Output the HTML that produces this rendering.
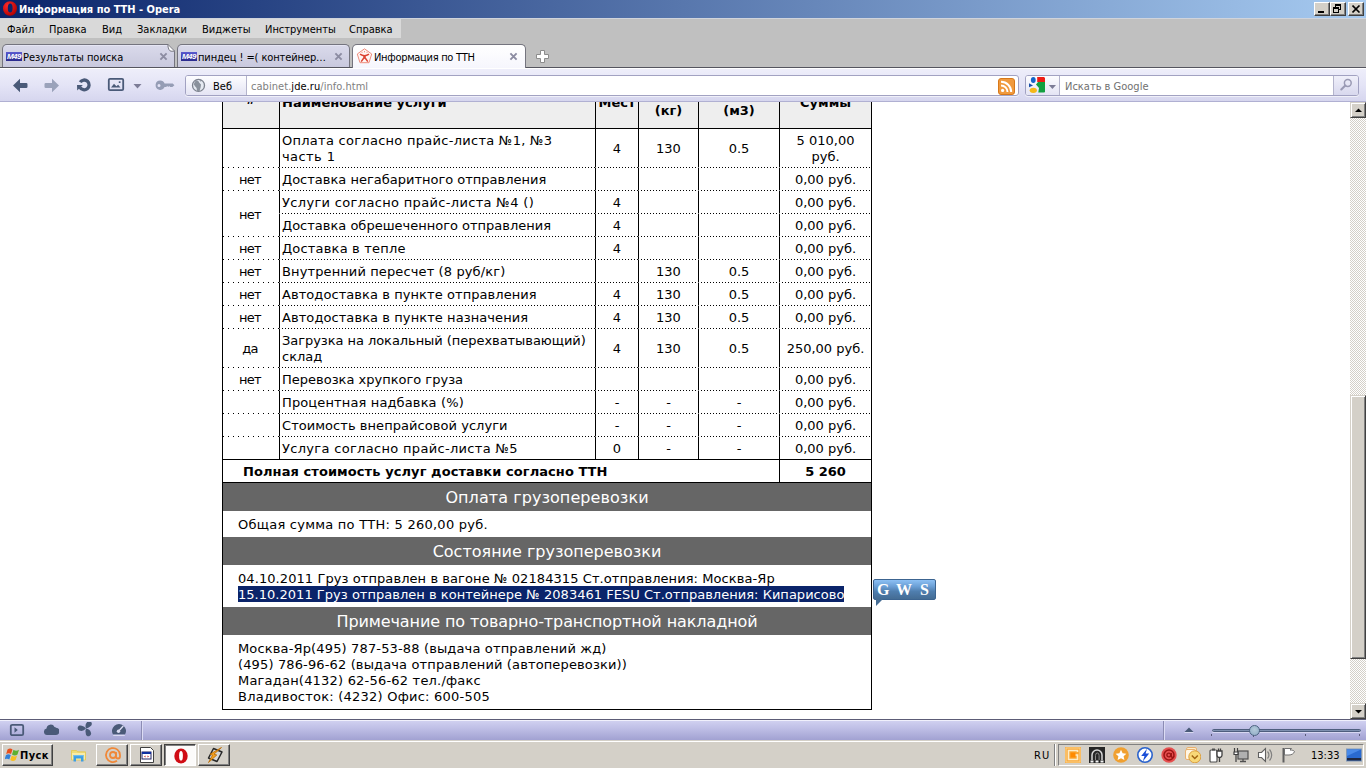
<!DOCTYPE html>
<html lang="ru"><head><meta charset="utf-8"><title>Информация по ТТН - Opera</title>
<style>
html,body{margin:0;padding:0}
body{width:1366px;height:768px;overflow:hidden;position:relative;background:#fff;font-family:"DejaVu Sans Condensed","Liberation Sans",sans-serif;font-size:11px;color:#000}
.abs{position:absolute}
#title{left:0;top:0;width:1366px;height:18px;background:linear-gradient(90deg,#0a246a 0%,#a6caf0 100%)}
#title .t{left:19px;top:3px;color:#fff;font-weight:bold;font-size:11px;line-height:14px;white-space:nowrap}
.cb{top:2px;width:16px;height:14px;background:#d4d0c8;box-sizing:border-box;border:1px solid;border-color:#fff #404040 #404040 #fff;box-shadow:inset -1px -1px 0 #808080}
#menu{left:0;top:18px;width:1366px;height:20px;background:linear-gradient(#d0d4dc 0,#d0d4dc 1px,#c0c0c0 1px)}
#menu .bg{left:0;top:1px;width:401px;height:19px;background:#d9d9d9}
#menu span{position:absolute;top:5px;line-height:14px;font-size:11px;white-space:nowrap}
#tabs{left:0;top:38px;width:1366px;height:30px;background:#c0c0c0}
.tab{position:absolute;top:6px;height:23px;box-sizing:border-box;border:1px solid #74747e;border-bottom:none;border-radius:5px 5px 0 0;background:linear-gradient(#e6e6f4 0,#e6e6f4 1px,#d9d9ea 1px,#c9c9de)}
.tab.act{background:linear-gradient(#ffffff,#f6f6fd);height:24px}
.tab .lbl{position:absolute;top:6px;line-height:14px;font-size:11px;white-space:nowrap}
.tab .x{position:absolute;top:5px;font-size:11px;line-height:14px;color:#7a7a86;font-weight:bold}
#addr{left:0;top:68px;width:1366px;height:34px;background:linear-gradient(#fafaff,#e6e6f8 60%,#d4d4ee)}
#page{left:0;top:102px;width:1349px;height:614px;background:#fff;overflow:hidden;font-family:"DejaVu Sans","Liberation Sans",sans-serif;font-size:13px}
#sb{left:1349px;top:102px;width:17px;height:614px;background:#e9e7e2}
#status{left:0;top:716px;width:1366px;height:24px;background:linear-gradient(#c4c4e8,#dcdcf4 50%,#c0c0e4)}
#task{left:0;top:740px;width:1366px;height:28px;background:#d4d0c8}

#box{left:222px;top:-31px;width:650px;box-sizing:border-box;border:1px solid #000;border-top:none;border-left:none;border-right:none}
#box:after{content:"";position:absolute;left:0;top:0;bottom:0;width:1px;background:#000}
#box:before{content:"";position:absolute;right:0;top:0;bottom:0;width:1px;background:#000}
table.t{border-collapse:separate;border-spacing:0;table-layout:fixed;width:650px;border-right:1px solid #000;border-bottom:1px solid #000;box-sizing:border-box}
table.t td,table.t th{border-left:1px solid #000;border-top:1px solid transparent;padding:4px 0 2px;line-height:16px;text-align:center;vertical-align:middle;font-weight:normal;font-size:13px;white-space:nowrap;overflow:hidden;background:repeating-linear-gradient(90deg,#000 0,#000 1px,transparent 1px,transparent 3px) 0 0/100% 1px no-repeat;background-origin:border-box}
table.t tr.h th{background:#eee;font-weight:bold;height:57px;box-sizing:border-box;padding:0 0 17px;border-top:none;vertical-align:bottom}
table.t tr.h th.m{padding-bottom:9px}
table.t tr.h th.l{text-align:left;padding-left:2px}
table.t tr.f td, table.t tr.tot td{border-top:1px solid #000;background:none}
table.t td.n{text-align:left;padding-left:2px}
table.t td.c1{letter-spacing:-0.7px;padding-right:2px;background:repeating-linear-gradient(90deg,#000 0,#000 1px,transparent 1px,transparent 5px) 1px 0/100% 1px no-repeat;background-origin:border-box}
table.t tr.tot td{font-weight:bold}
table.t td.tl{text-align:left;padding-left:20px}
.band{height:28px;background:#666;color:#fff;font-size:16px;line-height:30px;overflow:hidden;text-align:center;white-space:nowrap;margin:0 1px}
.txt{box-sizing:border-box;padding-left:16px;line-height:16px;font-size:13px;white-space:nowrap}
.sel{background:#0a246a;color:#fff;box-shadow:0 -1px 0 #0a246a}
#gws{left:873px;top:477px;width:63px;height:21px;box-sizing:border-box;border:1px solid #3c6490;border-radius:2px;background:linear-gradient(#8cc0f4 0,#6a9ed4 35%,#4f7eae 60%,#446c94 100%)}
#gws:after{content:"";position:absolute;left:2px;top:19px;width:0;height:0;border-style:solid;border-width:7px 7px 0 0;border-color:#446c94 transparent transparent transparent}
#gws span{position:absolute;top:0;font-family:"Liberation Serif",serif;font-weight:bold;font-size:16px;color:#fff;line-height:20px}
.cb i{position:absolute;background:#000}

.tab .fav{position:absolute;top:7px;width:16px;height:9px;background:linear-gradient(#5a5ad0,#2a2a8c);overflow:hidden}
.tab .fav b{position:absolute;left:1px;top:0;font-size:8px;line-height:9px;color:#fff;font-family:"Liberation Sans",sans-serif;letter-spacing:-0.6px;font-style:italic}
.tab svg.x{position:absolute;top:7px}
.tab svg.x path{stroke:#8c8ca2;stroke-width:1.9;fill:none}
.tab .fold{position:absolute;right:-1px;top:-1px;width:0;height:0;border-style:solid;border-width:0 0 7px 7px;border-color:transparent transparent #fff transparent;filter:drop-shadow(-1px 1px 0 #777)}

#addr{background:linear-gradient(#fff 0,#fff 1px,#eeeefa 1px,#e4e4f6 50%,#d6d6ee 33px,#b0b0d2 33px,#b0b0d2 34px)}
.fld{box-sizing:border-box;border:1px solid #a2a2c2;border-radius:3px;background:#fff;box-shadow:0 1px 0 rgba(255,255,255,.6)}
.fld .badge{background:linear-gradient(#fdfdff,#e4e4f4);border-right:1px solid #b4b4cc;border-radius:2px 0 0 2px}

#status{top:719px;height:21px;background:linear-gradient(#5c5c76 0,#5c5c76 1px,#f0f0fc 1px,#f0f0fc 2px,#d0d0f0 2px,#bcbce4 50%,#a2a2d2 21px)}
#task{top:740px;height:28px;background:linear-gradient(#d4d0c8 0,#d4d0c8 1px,#fff 1px,#fff 2px,#d4d0c8 2px)}
#page{height:617px}
#sb{left:1350px;width:16px;height:617px}

.btn{box-sizing:border-box;background:#d4d0c8;border:1px solid;border-color:#fff #404040 #404040 #fff;box-shadow:inset -1px -1px 0 #808080}
.btn.on{border-color:#404040 #fff #fff #404040;box-shadow:inset 1px 1px 0 #808080;background:#fcfbfa}

#sb{background:conic-gradient(#fff 25%,#d4d0c8 0 50%,#fff 0 75%,#d4d0c8 0) 0 0/2px 2px}
.sbb{box-sizing:border-box;background:#d4d0c8;border:1px solid;border-color:#d4d0c8 #404040 #404040 #d4d0c8;box-shadow:inset 1px 1px 0 #fff,inset -1px -1px 0 #808080}
</style></head><body>
<div id="title" class="abs"><svg class="abs" style="left:2px;top:1px" width="16" height="16" viewBox="0 0 16 16"><defs><radialGradient id="og" cx="35%" cy="30%" r="75%"><stop offset="0" stop-color="#ff2a2a"/><stop offset="1" stop-color="#b00000"/></radialGradient></defs><path d="M8 0.200a7 7.300 0 1 0 0 14.600a7 7.300 0 1 0 0-14.600zM8.200 2.500a2.400 4.500 0 1 1 0 9a2.400 4.500 0 1 1 0-9z" fill="url(#og)" fill-rule="evenodd"/></svg><span class="abs t">Информация по ТТН - Opera</span>
<div class="abs cb" style="left:1314px"><i style="left:3px;top:8px;width:6px;height:2px"></i></div>
<div class="abs cb" style="left:1330px"><svg class="abs" style="left:2px;top:1px" width="10" height="10" viewBox="0 0 10 10" shape-rendering="crispEdges"><path d="M2 0H8V6H6V5H7V2H3V3H2Z" fill="#000"/><path d="M0 3H6V9H0ZM1 5H5V8H1Z" fill="#000" fill-rule="evenodd"/></svg></div>
<div class="abs cb" style="left:1348px"><svg class="abs" style="left:3px;top:2px" width="9" height="8" viewBox="0 0 9 8"><path d="M0.5 0.5l7 7M7.5 0.5l-7 7" stroke="#000" stroke-width="1.6" fill="none"/></svg></div></div>
<div id="menu" class="abs"><div class="abs bg"></div>
<span style="left:7px">Файл</span><span style="left:49px">Правка</span><span style="left:102px">Вид</span><span style="left:137px">Закладки</span><span style="left:202px">Виджеты</span><span style="left:265px">Инструменты</span><span style="left:349px">Справка</span></div>
<div id="tabs" class="abs"><div class="abs" style="left:0;top:29px;width:1366px;height:1px;background:#55555f"></div>
<div class="tab" style="left:2px;width:173px"><span class="fav" style="left:3px"><b>M49</b></span><span class="lbl" style="left:20px">Результаты поиска</span><svg class="x" style="left:156px" width="9" height="9" viewBox="0 0 9 9"><path d="M1.400 1.400l6.200 6.200M7.600 1.400l-6.200 6.200"/></svg><svg class="abs" style="right:-1px;top:-1px" width="8" height="8" viewBox="0 0 8 8"><path d="M0.500 0H8V7.500z" fill="#c0c0c0"/><path d="M0.800 0.300L7.700 7.200H4Q1.200 6.800 0.800 0.300z" fill="#fff" stroke="#6a6a74" stroke-width=".9"/></svg></div>
<div class="tab" style="left:177px;width:173px"><span class="fav" style="left:3px"><b>M49</b></span><span class="lbl" style="left:20px;letter-spacing:-0.1px">пиндец ! =( контейнер…</span><svg class="x" style="left:156px" width="9" height="9" viewBox="0 0 9 9"><path d="M1.400 1.400l6.200 6.200M7.600 1.400l-6.200 6.200"/></svg></div>
<div class="tab act" style="left:352px;width:174px"><svg class="abs" style="left:3px;top:3px" width="17" height="17" viewBox="0 0 17 17"><path d="M8.500 0.800l7.200 5.200-2.700 8.700H4L1.300 6z" fill="#fff6f4" stroke="#ee8c7c" stroke-width="1"/><path d="M6 4.800v-1M8.500 4.300v-1.200M11 4.800v-1" stroke="#ee8c7c" stroke-width="1"/><path d="M4 6.200Q8.500 9.400 13 6.200" stroke="#dc4434" stroke-width="1.500" fill="none"/><path d="M6.800 7.600h3.400L8.500 11z" fill="#dc4434"/><path d="M8.500 9L5.200 13.600M8.500 9l3.300 4.600" stroke="#dc4434" stroke-width="1.500" fill="none"/></svg><span class="lbl" style="left:21px;letter-spacing:-0.3px">Информация по ТТН</span><svg class="x" style="left:156px" width="9" height="9" viewBox="0 0 9 9"><path d="M1.400 1.400l6.200 6.200M7.600 1.400l-6.200 6.200"/></svg></div>
<svg class="abs" style="left:535px;top:11px" width="15" height="15" viewBox="0 0 15 15"><path d="M5.5 1.5h4v4h4v4h-4v4h-4v-4h-4v-4h4z" fill="#fff" stroke="#8c8c8c" stroke-width="1" stroke-linejoin="round"/></svg>
</div>
<div id="addr" class="abs">
<svg class="abs" style="left:12px;top:10px" width="16" height="15" viewBox="0 0 16 15"><path d="M1 7.5L8 0.8V5h6.2a1.3 1.3 0 0 1 1.3 1.3v2.4A1.3 1.3 0 0 1 14.200 10H8v4.200z" fill="#4a5a78"/></svg>
<svg class="abs" style="left:44px;top:10px" width="16" height="15" viewBox="0 0 16 15"><path d="M15 7.5L8 0.8V5H1.800A1.300 1.300 0 0 0 .5 6.300v2.400A1.300 1.300 0 0 0 1.800 10H8v4.200z" fill="#9aa2ba"/></svg>
<svg class="abs" style="left:76px;top:9px" width="17" height="17" viewBox="0 0 17 17"><path d="M4.140 5.160A4.900 4.900 0 1 1 3.960 10.350" stroke="#4a5a78" stroke-width="3.300" fill="none"/><path d="M1 8.100h5.800L1.200 13.600z" fill="#4a5a78"/></svg>
<svg class="abs" style="left:107px;top:9px" width="18" height="15" viewBox="0 0 18 15"><rect x="1.800" y="1.800" width="14.400" height="11.400" rx="1.200" fill="none" stroke="#4a5a78" stroke-width="1.800"/><path d="M4 10.500l3-3.800 2.400 2.600 1.700-1.600 2.400 2.800z" fill="#4a5a78"/><rect x="11.800" y="4.300" width="1.700" height="1.700" fill="#4a5a78"/></svg>
<svg class="abs" style="left:133px;top:16px" width="9" height="5" viewBox="0 0 9 5"><path d="M0.500 0h8L4.500 4.500z" fill="#7c7c96"/></svg>
<svg class="abs" style="left:155px;top:12px" width="20" height="11" viewBox="0 0 20 11"><path d="M5.200 0.500a4.700 4.700 0 1 0 4.400 6.600h1.600l1-1 1 1 1-1 1 1h2.200l2-1.900-1.700-1.600H9.600A4.700 4.700 0 0 0 5.200.5zM4 3.900a1.500 1.500 0 1 1 0 3 1.500 1.500 0 0 1 0-3z" fill="#959db5" fill-rule="evenodd"/></svg>
<div class="abs fld" style="left:185px;top:7px;width:834px;height:21px"><div class="abs badge" style="left:0;top:0;width:60px;height:19px"></div>
<svg class="abs" style="left:5px;top:2px" width="15" height="15" viewBox="0 0 15 15"><circle cx="7.500" cy="7.400" r="6" fill="#e6eaf2" stroke="#7c828e" stroke-width="1.300"/><path d="M5.200 2.200L7.300 3l1 1.800 1.700 1.700-.3 2.600L8.600 13l-2.600.2-.4-3.300L4 8.300 2.800 6.300 3.700 4z" fill="#8a919c"/><path d="M8.500 1.800l2.200 1-1.200 1z" fill="#8a919c"/></svg>
<span class="abs" style="left:27px;top:4px;line-height:14px;white-space:nowrap">Веб</span>
<span class="abs" style="left:65px;top:4px;line-height:14px;white-space:nowrap;color:#808080;letter-spacing:0.05px">cabinet.<span style="color:#000">jde.ru</span>/info.html</span>
<svg class="abs" style="left:812px;top:2px" width="17" height="17" viewBox="0 0 17 17"><rect x=".5" y=".5" width="16" height="16" rx="2.500" fill="#f09a3e" stroke="#d87818"/><circle cx="4.600" cy="12.400" r="1.600" fill="#fff"/><path d="M3 7.500a6.500 6.500 0 0 1 6.500 6.500M3 3.800A10.200 10.200 0 0 1 13.200 14" stroke="#fff" stroke-width="1.900" fill="none"/></svg>
</div>
<div class="abs fld" style="left:1025px;top:7px;width:334px;height:21px"><div class="abs badge" style="left:0;top:0;width:33px;height:19px"></div>
<svg class="abs" style="left:0;top:0" width="33" height="19" viewBox="0 0 33 19"><ellipse cx="7.300" cy="4" rx="2.400" ry="3" fill="#1464c8"/><path d="M3 7.200L7 9.500 3 11.200z" fill="#1a50a8"/><ellipse cx="7.300" cy="14.300" rx="3.600" ry="2.600" fill="#f4b818"/><path d="M11.200 1h6.800l1 1v4h-7.800z" fill="#ee1c14"/><path d="M12 6h7v10l-.8.600H12.300L13 12 10 8.500z" fill="#12a040"/><path d="M22.800 9h7.200l-3.600 3.900z" fill="#7c7c96"/></svg>
<span class="abs" style="left:39px;top:4px;line-height:14px;white-space:nowrap;color:#707070">Искать в Google</span>
<div class="abs badge" style="right:0;top:0;width:24px;height:19px;border-right:none;border-left:1px solid #b4b4cc;border-radius:0 2px 2px 0;background:linear-gradient(#f0f0fa,#d8d8ee)"></div>
<svg class="abs" style="left:314px;top:2px" width="13" height="13" viewBox="0 0 13 13"><circle cx="7.800" cy="5" r="3.400" fill="none" stroke="#9a9ab4" stroke-width="1.500"/><path d="M5.300 7.500L1.300 11.500" stroke="#9a9ab4" stroke-width="2" stroke-linecap="round"/></svg>
</div>
</div>
<div id="page" class="abs"><div id="box" class="abs">
<table class="t" cellspacing="0" cellpadding="0"><colgroup><col style="width:57px"><col style="width:316px"><col style="width:43px"><col style="width:60px"><col style="width:81px"><col style="width:92px"></colgroup>
<tr class="h"><th style="padding-bottom:20px">#</th><th class="l">Наименование услуги</th><th>Кол-во<br>Мест</th><th class="m">Вес<br>(кг)</th><th class="m">Объем<br>(м3)</th><th>Расчет<br>Суммы</th></tr>
<tr class="f"><td class="c1"></td><td class="n"><span style="letter-spacing:0.274px">Оплата согласно прайс-листа №1, №3</span><br><span style="letter-spacing:0.429px">часть 1</span></td><td>4</td><td>130</td><td>0.5</td><td>5 010,00<br>руб.</td></tr>
<tr><td class="c1">нет</td><td class="n">Доставка негабаритного отправления</td><td></td><td></td><td></td><td>0,00 руб.</td></tr>
<tr><td class="c1" rowspan="2">нет</td><td class="n"><span style="letter-spacing:0.333px">Услуги согласно прайс-листа №4 ()</span></td><td>4</td><td></td><td></td><td>0,00 руб.</td></tr>
<tr><td class="n">Доставка обрешеченного отправления</td><td>4</td><td></td><td></td><td>0,00 руб.</td></tr>
<tr><td class="c1">нет</td><td class="n"><span style="letter-spacing:0.188px">Доставка в тепле</span></td><td>4</td><td></td><td></td><td>0,00 руб.</td></tr>
<tr><td class="c1">нет</td><td class="n"><span style="letter-spacing:0.117px">Внутренний пересчет (8 руб/кг)</span></td><td></td><td>130</td><td>0.5</td><td>0,00 руб.</td></tr>
<tr><td class="c1">нет</td><td class="n"><span style="letter-spacing:0.073px">Автодоставка в пункте отправления</span></td><td>4</td><td>130</td><td>0.5</td><td>0,00 руб.</td></tr>
<tr><td class="c1">нет</td><td class="n"><span style="letter-spacing:0.078px">Автодоставка в пункте назначения</span></td><td>4</td><td>130</td><td>0.5</td><td>0,00 руб.</td></tr>
<tr><td class="c1">да</td><td class="n"><span style="letter-spacing:-0.051px">Загрузка на локальный (перехватывающий)</span><br>склад</td><td>4</td><td>130</td><td>0.5</td><td>250,00 руб.</td></tr>
<tr><td class="c1">нет</td><td class="n">Перевозка хрупкого груза</td><td></td><td></td><td></td><td>0,00 руб.</td></tr>
<tr><td class="c1"></td><td class="n"><span style="letter-spacing:0.13px">Процентная надбавка (%)</span></td><td>-</td><td>-</td><td>-</td><td>0,00 руб.</td></tr>
<tr><td class="c1"></td><td class="n"><span style="letter-spacing:0.052px">Стоимость внепрайсовой услуги</span></td><td>-</td><td>-</td><td>-</td><td>0,00 руб.</td></tr>
<tr><td class="c1"></td><td class="n"><span style="letter-spacing:0.317px">Услуга согласно прайс-листа №5</span></td><td>0</td><td>-</td><td>-</td><td>0,00 руб.</td></tr>
<tr class="tot"><td colspan="5" class="tl"><span style="letter-spacing:0.08px">Полная стоимость услуг доставки согласно ТТН</span></td><td>5 260</td></tr>
</table>
<div class="band"><span style="letter-spacing:0.071px">Оплата грузоперевозки</span></div>
<div class="txt" style="height:26px;padding-top:6px"><span style="letter-spacing:0.242px">Общая сумма по ТТН: 5 260,00 руб.</span></div>
<div class="band">Состояние грузоперевозки</div>
<div class="txt" style="height:42px;padding-top:6px"><span style="letter-spacing:0.079px">04.10.2011 Груз отправлен в вагоне № 02184315 Ст.отправления: Москва-Яр</span><br><span class="sel" style="letter-spacing:0.025px">15.10.2011 Груз отправлен в контейнере № 2083461 FESU Ст.отправления: Кипарисово</span></div>
<div class="band"><span style="letter-spacing:-0.091px">Примечание по товарно-транспортной накладной</span></div>
<div class="txt" style="height:74px;padding-top:6px"><span style="letter-spacing:0.146px">Москва-Яр(495) 787-53-88 (выдача отправлений жд)</span><br><span style="letter-spacing:0.135px">(495) 786-96-62 (выдача отправлений (автоперевозки))</span><br><span style="letter-spacing:0.203px">Магадан(4132) 62-56-62 тел./факс</span><br><span style="letter-spacing:0.23px">Владивосток: (4232) Офис: 600-505</span></div>
</div>
<div id="gws" class="abs"><span style="left:3px">G</span><span style="left:22px">W</span><span style="left:46px">S</span></div>
</div>
<div id="sb" class="abs"><div class="abs sbb" style="left:0;top:0;width:16px;height:16px"><svg class="abs" style="left:4px;top:5px" width="7" height="4" viewBox="0 0 7 4"><path d="M0 4L3.500 0.500 7 4z" fill="#000"/></svg></div>
<div class="abs sbb" style="left:0;top:293px;width:16px;height:264px"></div>
<div class="abs sbb" style="left:0;top:601px;width:16px;height:16px"><svg class="abs" style="left:4px;top:6px" width="7" height="4" viewBox="0 0 7 4"><path d="M0 0L3.500 3.500 7 0z" fill="#000"/></svg></div></div>
<div id="status" class="abs">
<svg class="abs" style="left:9px;top:4px" width="16" height="14" viewBox="0 0 16 14"><rect x="1.800" y="1.800" width="12.400" height="10.400" rx="1.500" fill="none" stroke="#4a5a78" stroke-width="1.800"/><path d="M5.500 4.200l3.300 2.800-3.300 2.800z" fill="#4a5a78"/></svg>
<svg class="abs" style="left:43px;top:5px" width="16" height="12" viewBox="0 0 16 12"><path d="M4 11a3.300 3.300 0 0 1-.5-6.500A4.200 4.200 0 0 1 11.500 3a3 3 0 0 1 1.600 .8A3.600 3.600 0 0 1 12.500 11z" fill="#4a5a78"/></svg>
<svg class="abs" style="left:77px;top:3px" width="16" height="16" viewBox="0 0 16 16"><g fill="#4a5a78" transform="translate(9 6.500)"><path d="M0 0Q2.200 -3.200 5.400 -2.800A2.700 2.700 0 1 1 4.400 2.300Q1.600 1.800 0 0Z" transform="rotate(-55)"/><path d="M0 0Q2.200 -3.200 5.400 -2.800A2.700 2.700 0 1 1 4.400 2.300Q1.600 1.800 0 0Z" transform="rotate(185)"/><path d="M0 0Q2.200 -3.200 5.400 -2.800A2.700 2.700 0 1 1 4.400 2.300Q1.600 1.800 0 0Z" transform="rotate(65)"/></g></svg>
<svg class="abs" style="left:111px;top:4px" width="16" height="14" viewBox="0 0 16 14"><path d="M2 11.600A7 7 0 1 1 14 11.600z" fill="#4a5a78"/><path d="M2.200 12.300h11.600" stroke="#e4e4f8" stroke-width="1"/><path d="M7.500 8.300L12 3.300" stroke="#dcdcf2" stroke-width="1.400" stroke-linecap="round"/><circle cx="7.500" cy="8.300" r="1.700" fill="#dcdcf2"/></svg>
<div class="abs" style="left:141px;top:2px;width:1px;height:20px;background:#8c8cb4"></div><div class="abs" style="left:142px;top:2px;width:1px;height:20px;background:#dcdcf4"></div>
<div class="abs" style="left:1163px;top:2px;width:1px;height:20px;background:#8c8cb4"></div><div class="abs" style="left:1164px;top:2px;width:1px;height:20px;background:#dcdcf4"></div>
<svg class="abs" style="left:1184px;top:8px" width="10" height="6" viewBox="0 0 10 6"><path d="M0.500 5L5 0.500 9.500 5z" fill="#4a5a78"/><path d="M0.500 5.600h9" stroke="#e8e8f8" stroke-width=".8"/></svg>
<div class="abs" style="left:1212px;top:10px;width:149px;height:3px;box-sizing:border-box;border-radius:1.500px;background:#7e90b0;border:1px solid #4e5e7e;border-left-width:1px;border-right-width:1px;box-shadow:0 1px 0 rgba(230,230,250,.7)"></div>
<div class="abs" style="left:1211px;top:15px;width:1px;height:2px;background:#5a5a7a"></div><div class="abs" style="left:1253px;top:15px;width:1px;height:3px;background:#5a5a7a"></div><div class="abs" style="left:1305px;top:15px;width:1px;height:2px;background:#5a5a7a"></div><div class="abs" style="left:1359px;top:15px;width:1px;height:2px;background:#5a5a7a"></div>
<div class="abs" style="left:1249px;top:6px;width:11px;height:11px;box-sizing:border-box;border-radius:50%;border:1.300px solid #4e6482;background:radial-gradient(circle at 50% 40%,#b4cada,#8eaac4)"></div>
</div>
<div id="task" class="abs"><div class="abs btn" style="left:2px;top:4px;width:51px;height:22px"><svg class="abs" style="left:2px;top:1px" width="17" height="17" viewBox="0 0 17 17"><path d="M2.500 3.500c1.800-1.200 3.500-1.200 5 0L6 8C4.500 7 3 7 1.200 8z" fill="#e8501c"/><path d="M8.500 3.800c1.800 1.200 3.500 1.200 5.500 0L12.500 8.500c-1.800 1.200-3.500 1.200-5.500 0z" fill="#5cb030"/><path d="M1 9c1.800-1.200 3.300-1 4.800 0L4.300 13.500c-1.500-1-3-1-4.800 0z" fill="#3080d8"/><path d="M6.800 9.500c1.800 1.200 3.500 1.200 5.300 0L10.600 14c-1.800 1.200-3.500 1.200-5.300 0z" fill="#f8c020"/></svg><span class="abs" style="left:17px;top:4px;font-weight:bold;font-size:11px;line-height:14px;letter-spacing:0.4px">Пуск</span></div><svg class="abs" style="left:70px;top:8px" width="17" height="15" viewBox="0 0 17 15"><path d="M1.500 2.500h5l1.200 1.300H15.500V12H1.500z" fill="#f0dc78" stroke="#e4c84c" stroke-width=".8"/><path d="M2 5h13v6.500H2z" fill="#f8eca8"/><path d="M3.500 7h10v6.500h-2.500v-3h-5v3H3.500z" fill="#3c9ee4"/><path d="M3.500 7h10v1.200h-10z" fill="#6cbcf0"/></svg><div class="abs btn" style="left:96px;top:4px;width:32px;height:22px"><svg class="abs" style="left:7px;top:1px" width="18" height="18" viewBox="0 0 18 18"><circle cx="9" cy="9" r="3" fill="none" stroke="#f08838" stroke-width="1.800"/><path d="M12 6v4.500a2 2 0 0 0 4 0V9A7 7 0 1 0 13 14.800" fill="none" stroke="#f08838" stroke-width="1.800"/></svg></div><div class="abs btn" style="left:130px;top:4px;width:32px;height:22px"><svg class="abs" style="left:9px;top:2px" width="14" height="16" viewBox="0 0 14 16"><path d="M0.500 0.500h10l3 3v12h-13z" fill="#fff" stroke="#404040"/><rect x="2" y="5" width="9" height="7" fill="#fff" stroke="#202060"/><rect x="2" y="5" width="9" height="2" fill="#1030a0"/><path d="M4 9.500l1.500-1v2zM9 9.500l-1.500-1v2z" fill="#c02020"/></svg></div><div class="abs btn on" style="left:164px;top:4px;width:32px;height:22px"><svg class="abs" style="left:9px;top:3px" width="14" height="16" viewBox="0 0 14 16"><ellipse cx="7" cy="8" rx="6.700" ry="7.400" fill="#d00c14"/><ellipse cx="7" cy="7.800" rx="1.900" ry="4.900" fill="#fff"/></svg></div><div class="abs btn" style="left:198px;top:4px;width:32px;height:22px"><svg class="abs" style="left:7px;top:1px" width="18" height="18" viewBox="0 0 18 18"><path d="M7.500 2.500l8.500 3.500-5 9.500-8.500-3.500z" fill="#d8d8d8" stroke="#282828" stroke-width="1.500" stroke-linejoin="round"/><path d="M15.500 1.500L8 8.200l2.800.8L2.500 16.500 6.500 9.200 4 8.200z" fill="#f4a020" stroke="#b86800" stroke-width=".8" stroke-linejoin="round"/></svg></div><span class="abs" style="left:1034px;top:9px;font-size:11px;line-height:14px;letter-spacing:1px">RU</span><div class="abs" style="left:1054px;top:4px;width:1px;height:22px;background:#808080"></div><div class="abs" style="left:1055px;top:4px;width:1px;height:22px;background:#fff"></div><div class="abs" style="left:1058px;top:4px;width:306px;height:22px;box-sizing:border-box;border:1px solid;border-color:#808080 #fff #fff #808080"></div><svg class="abs" style="left:1065px;top:7px" width="16" height="16" viewBox="0 0 16 16"><rect x="0" y="0" width="16" height="16" fill="#f8a838"/><rect x="1" y="1" width="14" height="14" fill="none" stroke="#fcd490" stroke-width="1"/><path d="M12.500 5V3.500H3.500v9h9V8H8.500" fill="none" stroke="#fdecc8" stroke-width="1.600"/><rect x="5.500" y="5.500" width="5" height="5" fill="#ff8a00"/></svg><svg class="abs" style="left:1089px;top:7px" width="16" height="16" viewBox="0 0 16 16"><rect x="0" y="0" width="16" height="16" fill="#262626"/><path d="M3 13V8a5 5 0 0 1 10 0v5" stroke="#d8d8d8" stroke-width="1.500" fill="none"/><path d="M6.500 13V8.500a1.800 2.500 0 0 1 3.600 0V13" stroke="#8a8a8a" stroke-width="1" fill="none"/><path d="M1.500 13.500h3v2h-3zM6.500 13.500h3v2h-3zM11.500 13.500h3v2h-3z" fill="#f4f4f4"/></svg><svg class="abs" style="left:1113px;top:7px" width="16" height="16" viewBox="0 0 16 16"><circle cx="8" cy="8" r="7.800" fill="#f0a030"/><path d="M8 2.800l1.600 3.500 3.800.4-2.800 2.600.8 3.800L8 11.200l-3.400 1.900.8-3.800L2.600 6.700l3.800-.4z" fill="#fff"/></svg><svg class="abs" style="left:1137px;top:7px" width="16" height="16" viewBox="0 0 16 16"><circle cx="8" cy="8" r="7.200" fill="#fff" stroke="#2a62cc" stroke-width="1.600"/><path d="M10 1.800L4.200 9h3.300L5.800 14.500 12.200 6.600H8.600z" fill="#1a4ed8"/></svg><svg class="abs" style="left:1161px;top:7px" width="16" height="16" viewBox="0 0 16 16"><circle cx="8" cy="8" r="7.700" fill="#e65050"/><circle cx="8" cy="8" r="5" fill="none" stroke="#9c1414" stroke-width="1.500"/><circle cx="7.800" cy="8" r="1.900" fill="none" stroke="#9c1414" stroke-width="1.400"/><path d="M10.300 6v3.300a1.400 1.400 0 0 0 2.700 0" stroke="#9c1414" stroke-width="1.400" fill="none"/></svg><svg class="abs" style="left:1185px;top:7px" width="16" height="16" viewBox="0 0 16 16"><rect x="1.500" y="0.500" width="10" height="10" rx="1.500" fill="#fdebc8" stroke="#e8b070"/><rect x="0.500" y="2.500" width="10" height="10" rx="1.500" fill="#fff6e4" stroke="#e8b070"/><circle cx="9.800" cy="9.800" r="6" fill="#f8d878" stroke="#dca040"/><path d="M6.800 8.500l3 3 3-3" stroke="#a06410" stroke-width="1.500" fill="none"/></svg><svg class="abs" style="left:1209px;top:7px" width="16" height="16" viewBox="0 0 16 16"><rect x="1" y="3" width="7" height="12" rx="1" fill="#fff" stroke="#505050" stroke-width="1.200"/><rect x="3" y="1.500" width="3" height="2" fill="#505050"/><path d="M8 4h5v4a2.500 2.500 0 0 1-5 0zM9.500 1.500v2.500M11.500 1.500v2.500M10.500 10.500V15" stroke="#404040" stroke-width="1.300" fill="#fff"/></svg><svg class="abs" style="left:1233px;top:7px" width="16" height="16" viewBox="0 0 16 16"><rect x="5" y="4" width="10" height="8" fill="#b0b0b0" stroke="#505050" stroke-width="1.200"/><path d="M7 14.500h6M10 12v2.500" stroke="#505050" stroke-width="1.300"/><path d="M1.500 1v4M4.500 1v4M1 5h4v2.500H1zM3 7.500V15" stroke="#404040" stroke-width="1.200" fill="#fff"/></svg><svg class="abs" style="left:1257px;top:7px" width="16" height="16" viewBox="0 0 16 16"><path d="M1.500 5.500h3L8.500 1.500v13L4.500 10.500h-3z" fill="#fff" stroke="#606060" stroke-width="1.100"/><path d="M10.500 4.500a5 5 0 0 1 0 7M12.500 2.500a8 8 0 0 1 0 11" stroke="#808080" stroke-width="1.200" fill="none"/></svg><svg class="abs" style="left:1281px;top:7px" width="16" height="16" viewBox="0 0 16 16"><path d="M2.500 1v14.500" stroke="#606060" stroke-width="2"/><path d="M3.500 1.500h7l-1.500 1.500c2 0 4 .5 4.500 1.500-.5 2-3 3.500-5.500 3.500H3.500z" fill="#fff" stroke="#707070" stroke-width="1"/></svg><svg class="abs" style="left:1346px;top:7px" width="16" height="16" viewBox="0 0 16 16"><rect x="0.500" y="2" width="15" height="12" fill="#2a6ad0" stroke="#8098b8"/><path d="M1 11h14v2.500H1z" fill="#202840"/><path d="M1 2.500h14L1 9z" fill="#4a8ae8"/></svg><span class="abs" style="left:1311px;top:9px;font-size:11px;line-height:14px">13:33</span></div>
</body></html>
